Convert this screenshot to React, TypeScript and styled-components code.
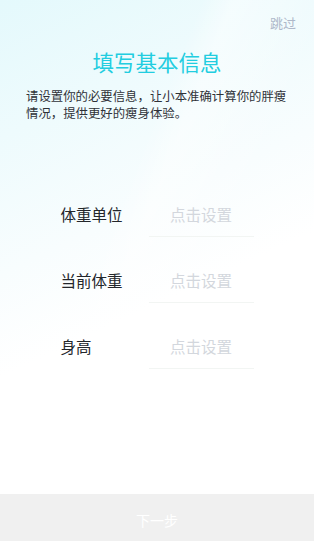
import styled, { createGlobalStyle } from "styled-components";

const GlobalStyle = createGlobalStyle`
  html, body {
    margin: 0;
    padding: 0;
    height: 100%;
  }
  body {
    font-family: "Noto Sans CJK SC", "Noto Sans", sans-serif;
  }
  #root {
    height: 100%;
  }
`;

const Page = styled.div`
  display: flex;
  flex-direction: column;
  height: 100vh;
  background:
    linear-gradient(112deg, rgba(255, 255, 255, 0) 38%, rgba(255, 255, 255, 0.45) 44%, rgba(255, 255, 255, 0) 62%),
    linear-gradient(155deg, #e4f9fc 0%, #eefbfd 20%, #f8fdfe 40%, #ffffff 55%, #ffffff 100%);
  overflow: hidden;
`;

const TopBar = styled.div`
  display: flex;
  justify-content: flex-end;
  padding: 14px 18px 0 0;
`;

const Skip = styled.span`
  font-size: 13px;
  line-height: 18px;
  color: #aeb8ca;
`;

const Title = styled.h1`
  margin: 15px 0 0;
  text-align: center;
  font-size: 21.5px;
  line-height: 30px;
  font-weight: 400;
  color: #22cde0;
`;

const Description = styled.p`
  margin: 11px 0 0;
  padding: 0 26px;
  font-size: 12.4px;
  line-height: 17px;
  color: #2f3238;
`;

const Form = styled.div`
  display: flex;
  flex-direction: column;
  align-items: center;
  margin-top: 59px;
`;

const Row = styled.div`
  display: flex;
  align-items: center;
  height: 66px;
`;

const Label = styled.span`
  width: 88px;
  font-size: 15.5px;
  color: #23262b;
`;

const Field = styled.div`
  width: 105px;
  padding-top: 12px;
  padding-bottom: 11px;
  border-bottom: 1px solid #f2f5f3;
  text-align: center;
  font-size: 15.5px;
  line-height: 22px;
  color: #d3d7dd;
`;

const NextButton = styled.button`
  margin-top: auto;
  height: 47px;
  border: none;
  background: #f0f0f0;
  color: #ffffff;
  font-family: inherit;
  font-size: 14px;
  padding-top: 5px;
`;

const rows = ["体重单位", "当前体重", "身高"];

export default function App() {
  return (
    <>
      <GlobalStyle />
      <Page>
        <TopBar>
          <Skip>跳过</Skip>
        </TopBar>
        <Title>填写基本信息</Title>
        <Description>
          请设置你的必要信息，让小本准确计算你的胖瘦情况，提供更好的瘦身体验。
        </Description>
        <Form>
          {rows.map((label) => (
            <Row key={label}>
              <Label>{label}</Label>
              <Field>点击设置</Field>
            </Row>
          ))}
        </Form>
        <NextButton>下一步</NextButton>
      </Page>
    </>
  );
}
